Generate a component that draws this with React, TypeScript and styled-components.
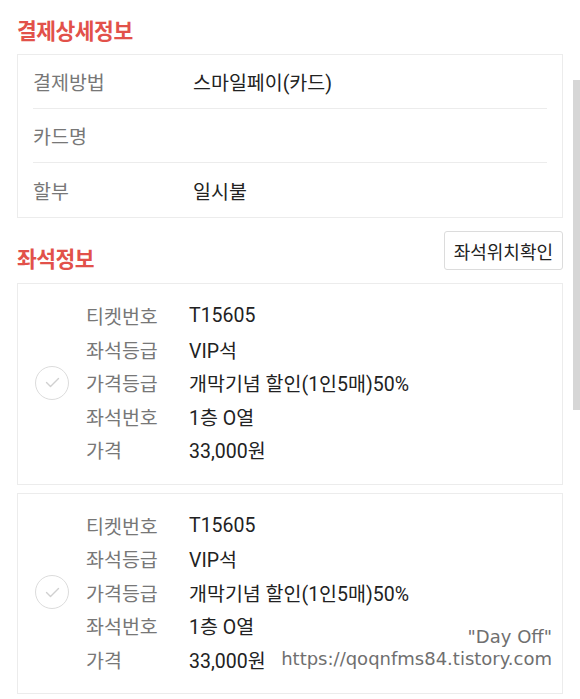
import styled, { createGlobalStyle } from "styled-components";

const GlobalStyle = createGlobalStyle`
    body {
        margin: 0;
        background: #ffffff;
        font-family: Roboto, "Noto Sans CJK KR", sans-serif;
        color: #222;
    }
`;

const Page = styled.div`
    position: relative;
    width: 580px;
    height: 699px;
    overflow: hidden;
    padding: 0 17px;
    box-sizing: border-box;
`;

const SectionHead = styled.div<{ $top: number; $gap: number }>`
    display: flex;
    justify-content: space-between;
    align-items: flex-end;
    padding-top: ${(p) => p.$top}px;
    margin-bottom: ${(p) => p.$gap}px;
`;

const Title = styled.h2<{ $under?: number }>`
    margin: 0 0 ${(p) => p.$under ?? 0}px;
    font-size: 21.5px;
    font-weight: 700;
    line-height: 26px;
    color: #e2514a;
    font-family: "Noto Sans CJK KR", sans-serif;
    letter-spacing: -0.5px;
`;

const OutlineButton = styled.button`
    height: 39px;
    padding: 0 9px;
    margin-bottom: 13px;
    background: #fff;
    border: 1px solid #dcdcdc;
    border-radius: 3px;
    font-family: "Noto Sans CJK KR", sans-serif;
    font-size: 18px;
    color: #222;
`;

const InfoBox = styled.div`
    border: 1px solid #ececec;
    padding: 0 15px;
`;

const InfoRow = styled.div`
    display: flex;
    align-items: center;
    height: 54px;
    box-sizing: border-box;
    border-bottom: 1px solid #ececec;
    font-size: 19.5px;
    &:last-child {
        border-bottom: none;
    }
`;

const InfoLabel = styled.span`
    width: 160px;
    color: #777;
`;

const InfoValue = styled.span`
    color: #222;
`;

const SeatCard = styled.div`
    display: flex;
    align-items: center;
    border: 1px solid #ececec;
    padding: 15px 0 17px 17px;
    margin-bottom: 8px;
`;

const Check = styled.div`
    width: 34px;
    height: 34px;
    flex: none;
    border: 1.5px solid #dcdcdc;
    border-radius: 50%;
    box-sizing: border-box;
    display: flex;
    align-items: center;
    justify-content: center;
    margin-right: 17px;
`;

const SeatGrid = styled.div`
    display: grid;
    grid-template-columns: 103px auto;
    grid-auto-rows: 33.5px;
    align-items: center;
    font-size: 19.5px;
`;

const SeatLabel = styled.span`
    color: #777;
`;

const SeatValue = styled.span`
    color: #222;
`;

const Watermark = styled.div`
    position: absolute;
    right: 28px;
    bottom: 29px;
    text-align: right;
    font-family: "DejaVu Sans", sans-serif;
    color: #6f6f6f;
    font-size: 18px;
    line-height: 22px;
    background: rgba(255, 255, 255, 0.6);
`;

const Scrollbar = styled.div`
    position: absolute;
    right: 0;
    top: 80px;
    width: 7px;
    height: 330px;
    background: #d6d6d6;
`;

const payment = [
    ["결제방법", "스마일페이(카드)"],
    ["카드명", ""],
    ["할부", "일시불"],
];

const seats = [
    { ticket: "T15605" },
    { ticket: "T15605" },
];

function CheckIcon() {
    return (
        <svg width="15" height="11" viewBox="0 0 15 11" fill="none">
            <path d="M1.5 5.5 L5.5 9.5 L13.5 1.5" stroke="#d0d0d0" strokeWidth="1.4" strokeLinecap="round" strokeLinejoin="round" />
        </svg>
    );
}

export default function App() {
    return (
        <>
            <GlobalStyle />
            <Page>
                <SectionHead $top={17} $gap={11}>
                    <Title>결제상세정보</Title>
                </SectionHead>
                <InfoBox>
                    {payment.map(([label, value]) => (
                        <InfoRow key={label}>
                            <InfoLabel>{label}</InfoLabel>
                            <InfoValue>{value}</InfoValue>
                        </InfoRow>
                    ))}
                </InfoBox>
                <SectionHead $top={13} $gap={0}>
                    <Title $under={12}>좌석정보</Title>
                    <OutlineButton>좌석위치확인</OutlineButton>
                </SectionHead>
                {seats.map((s, i) => (
                    <SeatCard key={i}>
                        <Check>
                            <CheckIcon />
                        </Check>
                        <SeatGrid>
                            <SeatLabel>티켓번호</SeatLabel>
                            <SeatValue>{s.ticket}</SeatValue>
                            <SeatLabel>좌석등급</SeatLabel>
                            <SeatValue>VIP석</SeatValue>
                            <SeatLabel>가격등급</SeatLabel>
                            <SeatValue>개막기념 할인(1인5매)50%</SeatValue>
                            <SeatLabel>좌석번호</SeatLabel>
                            <SeatValue>1층 O열</SeatValue>
                            <SeatLabel>가격</SeatLabel>
                            <SeatValue>33,000원</SeatValue>
                        </SeatGrid>
                    </SeatCard>
                ))}
                <Watermark>
                    <div>"Day Off"</div>
                    <div>https://qoqnfms84.tistory.com</div>
                </Watermark>
                <Scrollbar />
            </Page>
        </>
    );
}
